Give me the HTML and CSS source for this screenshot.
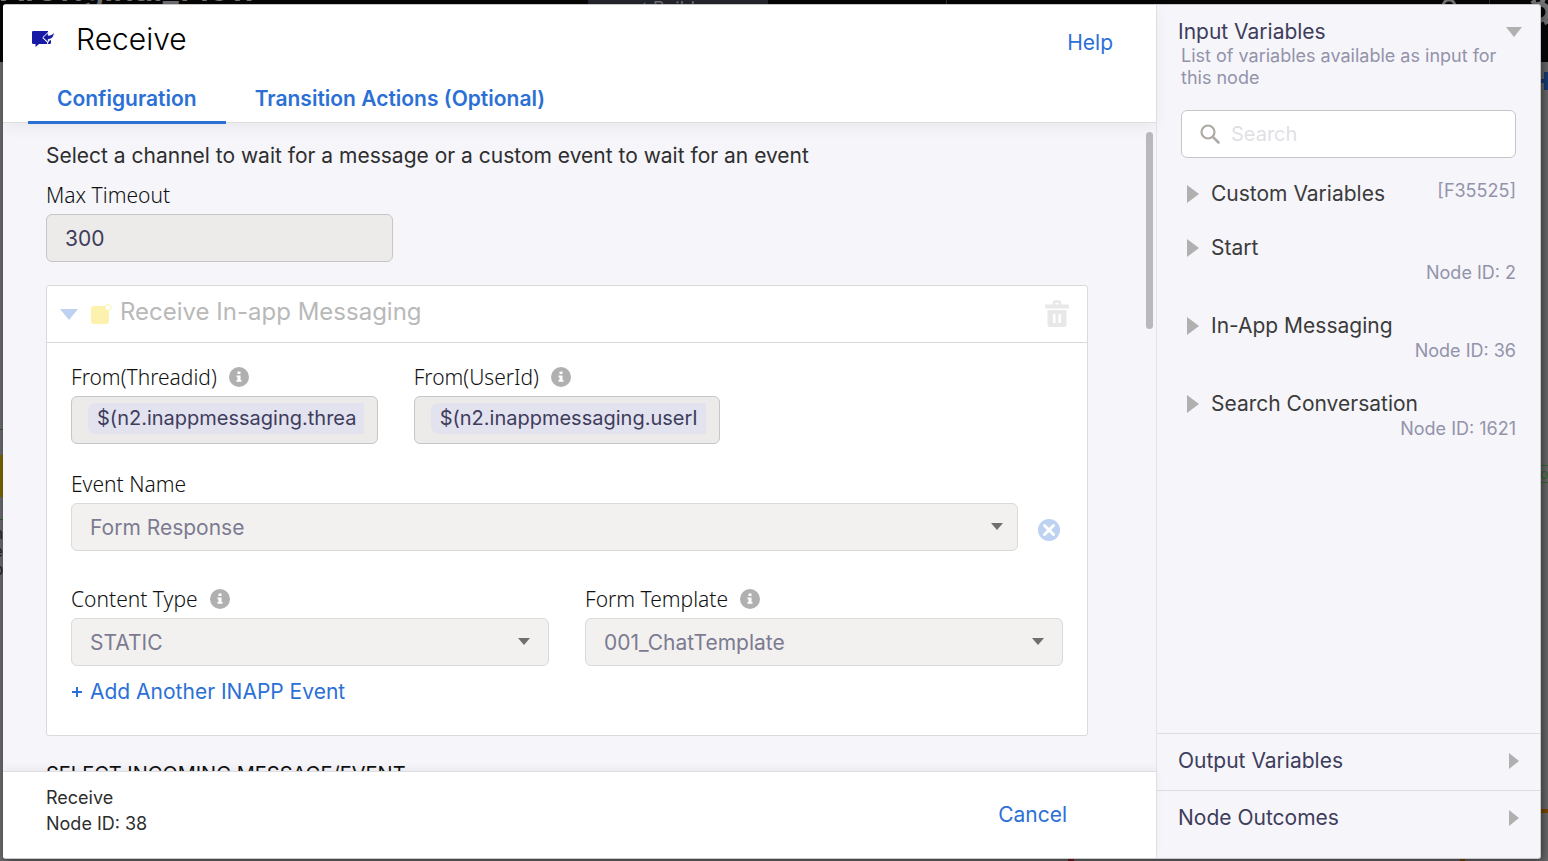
FILE: index.html
```html
<!DOCTYPE html>
<html lang="en">
<head>
<meta charset="utf-8">
<title>Receive</title>
<link rel="stylesheet" href="styles.css">
</head>
<body>
<div class="backdrop" aria-hidden="true">
  <div class="backdrop-bar"><span class="backdrop-title">AIOriginal_Flow</span><span class="backdrop-tab">t Builder</span><span class="backdrop-divider divider-tab"></span><span class="backdrop-divider"></span>
    <svg class="backdrop-user" width="16" height="16" viewBox="0 0 16 16"><circle cx="8" cy="8" r="6" fill="none" stroke="#77777a" stroke-width="3"/></svg>
    <svg class="backdrop-gear" width="28" height="28" viewBox="0 0 28 28"><circle cx="14" cy="14" r="8" fill="none" stroke="#77777a" stroke-width="5"/><circle cx="14" cy="14" r="12" fill="none" stroke="#77777a" stroke-width="4" stroke-dasharray="5 4.4"/></svg>
  </div>
  <span class="bit bit-node"></span>
  <span class="bit bit-line-a"></span>
  <span class="bit bit-line-b"></span>
  <span class="bit bit-text">h<br>e<br>p</span>
  <svg class="bit bit-plus" width="14" height="18" viewBox="0 0 14 18"><path d="M7 0v18M0 9h14" stroke="#173c72" stroke-width="4"/></svg>
  <span class="bit bit-tag">on</span>
  <span class="bit bit-wire"></span>
  <span class="bit bit-red"></span>
  <span class="bit bit-orange"></span>
</div>

<div class="modal" role="dialog" aria-labelledby="dialog-title">
  <main class="main">
    <header class="head">
      <div class="head-row">
        <svg class="node-icon" width="24" height="18" viewBox="0 0 24 18"><path fill="#171aa5" d="M1.200 1H16v2.500L10.500 8l4.500 4.500V14H7l-3.500 3v-3H1.200Q0 14 0 12.800V2.200Q0 1 1.200 1z"/><path fill="#171aa5" stroke="#fff" stroke-width="1" stroke-linejoin="round" d="M16.300 2.200v3c2.500 0 4.200-1 6.200-3.200-.2 4.500-2.500 7.300-6.200 7.500v3.300L10.800 7.500z"/><path fill="#171aa5" d="M17.300 10.800l1.700-.8v2.500q0 1.500-1.500 1.500h-2z"/></svg>
        <h1 class="title" id="dialog-title">Receive</h1>
        <a class="link help" href="#help">Help</a>
      </div>
      <nav class="tabs">
        <button class="tab tab-active" type="button">Configuration</button>
        <button class="tab" type="button">Transition Actions (Optional)</button>
      </nav>
    </header>

    <section class="content">
      <p class="intro">Select a channel to wait for a message or a custom event to wait for an event</p>
      <div class="grid-three">
        <div class="field">
          <div class="label-row"><label for="timeout">Max Timeout</label></div>
          <input class="control" id="timeout" type="text" value="300" readonly>
        </div>
      </div>

      <div class="card">
        <div class="card-head">
          <svg width="18" height="12" viewBox="0 0 18 12"><path d="M0 1h18L9 12z" fill="#bdd1f1"/></svg>
          <svg class="channel-icon" width="21" height="21" viewBox="0 0 21 21"><rect x="0" y="2" width="18" height="18" rx="3" fill="#fdf2ad"/><circle cx="17" cy="3.500" r="3" fill="#fff" stroke="#fdf2ad"/></svg>
          <h2 class="card-title">Receive In-app Messaging</h2>
          <button class="icon-btn" type="button" aria-label="Delete"><svg width="24" height="28" viewBox="0 0 24 28"><path d="M9 5V3q0-1.500 1.500-1.500h3Q15 1.500 15 3v2" fill="none" stroke="#e8e8e8" stroke-width="2.500"/><rect x="0" y="4.500" width="24" height="4" rx="1" fill="#e8e8e8"/><path fill="#e8e8e8" fill-rule="evenodd" d="M2.500 10h19v14.500q0 2.500-2.500 2.500H5q-2.500 0-2.500-2.500zM8 14v9h2.500v-9zM13.500 14v9H16v-9z"/></svg></button>
        </div>
        <div class="card-body">
          <div class="grid-three">
            <div class="field">
              <div class="label-row"><label for="thread">From(Threadid)</label><svg class="info" viewBox="0 0 20 20"><circle cx="10" cy="10" r="10" fill="#b0b0b0"/><path fill="#fff" d="M8.500 4.500h3V7h-3zM7.500 8.500h4v4.500h1v1.800h-5V13h1v-2.700h-1z"/></svg></div>
              <div class="control token"><input class="chip" id="thread" type="text" value="$(n2.inappmessaging.threa" readonly></div>
            </div>
            <div class="field">
              <div class="label-row"><label for="user">From(UserId)</label><svg class="info" viewBox="0 0 20 20"><circle cx="10" cy="10" r="10" fill="#b0b0b0"/><path fill="#fff" d="M8.500 4.500h3V7h-3zM7.500 8.500h4v4.500h1v1.800h-5V13h1v-2.700h-1z"/></svg></div>
              <div class="control token"><input class="chip" id="user" type="text" value="$(n2.inappmessaging.userI" readonly></div>
            </div>
          </div>

          <div class="event-row">
            <div class="field">
              <div class="label-row"><label for="event">Event Name</label></div>
              <div class="select select-wide"><select class="control" id="event" disabled><option>Form Response</option></select><svg class="caret" viewBox="0 0 12 7"><path d="M0 0h12L6 7z" fill="#6f6f6f"/></svg></div>
            </div>
            <button class="icon-btn remove" type="button" aria-label="Remove event"><svg width="22" height="22" viewBox="0 0 22 22"><circle cx="11" cy="11" r="11" fill="#bdd1f1"/><path d="M6.500 6.500l9 9m0-9l-9 9" stroke="#fff" stroke-width="3" stroke-linecap="round"/></svg></button>
          </div>

          <div class="grid-two">
            <div class="field">
              <div class="label-row"><label for="ctype">Content Type</label><svg class="info" viewBox="0 0 20 20"><circle cx="10" cy="10" r="10" fill="#b0b0b0"/><path fill="#fff" d="M8.500 4.500h3V7h-3zM7.500 8.500h4v4.500h1v1.800h-5V13h1v-2.700h-1z"/></svg></div>
              <div class="select"><select class="control" id="ctype" disabled><option>STATIC</option></select><svg class="caret" viewBox="0 0 12 7"><path d="M0 0h12L6 7z" fill="#6f6f6f"/></svg></div>
            </div>
            <div class="field">
              <div class="label-row"><label for="template">Form Template</label><svg class="info" viewBox="0 0 20 20"><circle cx="10" cy="10" r="10" fill="#b0b0b0"/><path fill="#fff" d="M8.500 4.500h3V7h-3zM7.500 8.500h4v4.500h1v1.800h-5V13h1v-2.700h-1z"/></svg></div>
              <div class="select"><select class="control" id="template" disabled><option>001_ChatTemplate</option></select><svg class="caret" viewBox="0 0 12 7"><path d="M0 0h12L6 7z" fill="#6f6f6f"/></svg></div>
            </div>
          </div>
          <button class="link add" type="button"><svg width="12" height="12" viewBox="0 0 12 12"><path d="M6 1v10M1 6h10" stroke="#2c70d6" stroke-width="2"/></svg>Add Another INAPP Event</button>
        </div>
      </div>

      <h3 class="next-title">SELECT INCOMING MESSAGE/EVENT</h3>
      <span class="thumb"></span>
    </section>

    <footer class="foot">
      <div class="foot-info"><div>Receive</div><div>Node ID: 38</div></div>
      <button class="link" type="button">Cancel</button>
    </footer>
  </main>

  <aside class="side">
    <section class="side-inputs">
      <button class="side-head" type="button">Input Variables<svg width="16" height="10" viewBox="0 0 16 10"><path d="M0 0h16L8 10z" fill="#b0b0b0"/></svg></button>
      <div class="side-body">
        <p class="side-note">List of variables available as input for this node</p>
        <div class="search">
          <svg width="20" height="20" viewBox="0 0 20 20"><circle cx="8" cy="8" r="6.500" fill="none" stroke="#aeaaa6" stroke-width="2.200"/><path d="M12.800 12.800L18.500 18.500" stroke="#aeaaa6" stroke-width="2.500" stroke-linecap="round"/></svg>
          <input class="search-input" type="search" placeholder="Search" aria-label="Search">
        </div>
        <ul class="vars">
          <li class="var var-inline"><button class="var-name" type="button"><svg class="tri" viewBox="0 0 12 18"><path d="M0 0l12 9L0 18z" fill="#b0b0b0"/></svg>Custom Variables</button><span class="var-id">[F35525]</span></li>
          <li class="var"><button class="var-name" type="button"><svg class="tri" viewBox="0 0 12 18"><path d="M0 0l12 9L0 18z" fill="#b0b0b0"/></svg>Start</button><span class="var-id">Node ID: 2</span></li>
          <li class="var"><button class="var-name" type="button"><svg class="tri" viewBox="0 0 12 18"><path d="M0 0l12 9L0 18z" fill="#b0b0b0"/></svg>In-App Messaging</button><span class="var-id">Node ID: 36</span></li>
          <li class="var"><button class="var-name" type="button"><svg class="tri" viewBox="0 0 12 18"><path d="M0 0l12 9L0 18z" fill="#b0b0b0"/></svg>Search Conversation</button><span class="var-id">Node ID: 1621</span></li>
        </ul>
      </div>
    </section>
    <button class="side-section" type="button">Output Variables<svg width="10" height="16" viewBox="0 0 10 16"><path d="M0 0l10 8L0 16z" fill="#b0b0b0"/></svg></button>
    <button class="side-section side-last" type="button">Node Outcomes<svg width="10" height="16" viewBox="0 0 10 16"><path d="M0 0l10 8L0 16z" fill="#b0b0b0"/></svg></button>
  </aside>
</div>
</body>
</html>
```
FILE: styles.css
```css
* { box-sizing: border-box; }
body {
  margin: 0;
  height: 100vh;
  overflow: hidden;
  padding: 4px 7px 2px 3px;
  background: #69696b;
  font-family: Inter, "Liberation Sans", sans-serif;
  font-size: 21px;
  line-height: 28px;
  color: #2e2e2e;
}
h1, h2, h3, p, ul { margin: 0; padding: 0; font-weight: 400; }
ul { list-style: none; }
button { border: 0; padding: 0; background: none; font: inherit; color: inherit; text-align: left; cursor: pointer; }
svg { display: block; flex: none; }

/* Page behind the dialog */
.backdrop { position: absolute; inset: 0; overflow: hidden; z-index: 0; }
.backdrop-bar { position: relative; height: 62px; background: #060606; color: #77777a; }
.backdrop-title { position: absolute; left: 0; top: -25px; font-size: 34px; font-weight: 600; }
.backdrop-tab { position: absolute; left: 588px; top: 0; width: 180px; height: 62px; padding-left: 54px; background: #25262f; font-size: 18px; line-height: 18px; }
.backdrop-divider { position: absolute; right: 58px; top: 0; width: 1px; height: 62px; background: #333; }
.divider-tab { left: 946px; right: auto; }
.backdrop-user { position: absolute; right: 91px; top: -2px; }
.backdrop-gear { position: absolute; right: -6px; top: -2px; }
.bit { position: absolute; }
.bit-node { left: 0; top: 455px; width: 4px; height: 42px; background: #7a6400; }
.bit-line-a { left: 0; top: 429px; width: 4px; height: 1px; background: #2d5a2a; }
.bit-line-b { left: 0; top: 519px; width: 4px; height: 1px; background: #2d5a2a; }
.bit-text { left: -6px; top: 525px; font-size: 15px; line-height: 18px; color: #222; }
.bit-plus { right: -5px; top: 72px; }
.bit-tag { right: -9px; top: 465px; width: 18px; height: 18px; border: 1px solid #2f6b2a; color: #2f6b2a; font-size: 14px; line-height: 16px; }
.bit-wire { right: 0; top: 809px; width: 8px; height: 4px; background: #7a4600; }
.bit-red { left: 1068px; bottom: 0; width: 6px; height: 2px; background: #7a1a1a; }
.bit-orange { left: 1460px; bottom: 0; width: 5px; height: 2px; background: #7a4600; }

/* Dialog frame */
.modal {
  position: relative;
  z-index: 1;
  display: flex;
  height: 100%;
  border: 1px solid #c8c8c8;
  border-left-width: 0;
  border-radius: 3px;
  overflow: hidden;
  background: #f5f5fa;
  box-shadow: 2px 2px 8px rgba(0, 0, 0, .5);
}
.main { flex: 1; min-width: 0; display: flex; flex-direction: column; }
.side { flex: 0 0 384px; min-width: 0; display: flex; flex-direction: column; border-left: 1px solid #e4e4e8; color: #3e3d5c; }

.head { position: relative; z-index: 1; background: #fff; border-bottom: 1px solid #dededf; box-shadow: 0 4px 14px rgba(0, 0, 0, .06); }
.head-row { display: flex; align-items: center; height: 68px; padding: 0 43px 0 29px; }
.title { margin-left: 20px; flex: 1; font-size: 30px; font-weight: 300; line-height: 36px; color: #000; }
.link { color: #2c70d6; text-decoration: none; }
.help { padding-top: 8px; }
.tabs { display: flex; padding-left: 25px; }
.tab { height: 51px; padding: 3px 29px 0; color: #2c70d6; font-weight: 600; border-bottom: 3px solid transparent; margin-bottom: -2px; }
.tab-active { border-color: #2c70d6; }

.content { position: relative; flex: 1; min-height: 0; overflow: hidden; padding: 19px 68px 0 43px; }
.intro { margin-bottom: 11px; }
.thumb { position: absolute; top: 9px; right: 3px; width: 7px; height: 197px; border-radius: 4px; background: #b9b9bb; }

/* Fields */
.grid-three { display: grid; grid-template-columns: repeat(3, 1fr); }
.field { min-width: 0; }
.label-row { display: flex; align-items: center; gap: 12px; margin-bottom: 5px; font-family: "Noto Sans", sans-serif; font-weight: 300; color: #111; }
.info { width: 20px; height: 20px; }
.control {
  display: block;
  width: 100%;
  height: 48px;
  padding: 0 18px;
  border: 1px solid #c6c6c6;
  border-radius: 6px;
  background: #ecebe9;
  font-family: inherit;
  font-size: 21px;
  color: #3e3d5c;
  appearance: none;
  outline: none;
}
select.control { background: #f2f1ef; border-color: #dadada; color: #7c7b92; opacity: 1; }
.select { position: relative; }
.caret { position: absolute; right: 19px; top: 20px; width: 12px; height: 7px; }
.select-wide .caret { right: 15px; }
.token { padding: 6px 13px 0 16px; }
.chip { display: block; width: 100%; height: 31px; border: 0; border-radius: 8px 0 0 8px; padding: 0 0 2px 9px; background: #e3e2ef; font-family: inherit; font-size: 20px; color: #3e3d5c; outline: none; }

.card { margin-top: 23px; border: 1px solid #dadada; border-radius: 3px; background: #fff; }
.card-head { display: flex; align-items: center; height: 57px; padding: 0 18px 0 13px; border-bottom: 1px solid #dadada; }
.channel-icon { margin-left: 13px; }
.card-title { flex: 1; margin-left: 8px; padding-bottom: 5px; font-size: 24px; color: #b9b9b9; }
.icon-btn { display: flex; }
.card-body { padding: 20px 24px 29px; }
.card-body .grid-three { column-gap: 36px; }
.event-row { display: grid; grid-template-columns: 1fr auto; column-gap: 20px; align-items: end; margin-top: 26px; }
.remove { margin: 0 3px 10px 0; }
.grid-two { display: grid; grid-template-columns: 1fr 1fr; column-gap: 36px; margin-top: 34px; }
.add { display: flex; align-items: center; gap: 7px; margin-top: 12px; }
.next-title { margin-top: 24px; font-size: 20px; color: #111; }

.foot { position: relative; z-index: 1; display: flex; justify-content: space-between; align-items: center; height: 87px; padding: 0 89px 0 43px; background: #fff; border-top: 1px solid #dededf; box-shadow: 0 -3px 8px rgba(0, 0, 0, .05); }
.foot-info { font-size: 18px; line-height: 26px; padding-bottom: 8px; }

/* Variables panel */
.side-inputs { flex: 1; min-height: 0; }
.side-head { display: flex; justify-content: space-between; align-items: center; width: 100%; padding: 14px 18px 0 21px; line-height: 26px; }
.side-body { padding: 0 24px; }
.side-note { font-size: 18px; line-height: 22px; color: #9393aa; }
.search { display: flex; align-items: center; gap: 11px; height: 48px; margin-top: 21px; padding: 0 18px; border: 1px solid #c6c6c6; border-radius: 6px; background: #fff; }
.search-input { flex: 1; min-width: 0; border: 0; padding: 0; font: inherit; font-size: 20px; color: #3e3d5c; outline: none; background: none; }
.search-input::placeholder { color: #dfdfe5; }
.vars { padding-top: 22px; }
.var { margin-bottom: 28px; }
.var-inline { display: flex; justify-content: space-between; margin-bottom: 26px; }
.var-name { display: flex; align-items: center; gap: 12px; padding-left: 6px; color: #3b3b3b; }
.tri { width: 12px; height: 18px; }
.var-id { display: block; text-align: right; font-size: 18px; line-height: 22px; color: #9393aa; }
.side-section { display: flex; justify-content: space-between; align-items: center; height: 57px; padding: 0 21px 2px; border-top: 1px solid #dededf; }
.side-last { height: 68px; padding-bottom: 13px; }
```
